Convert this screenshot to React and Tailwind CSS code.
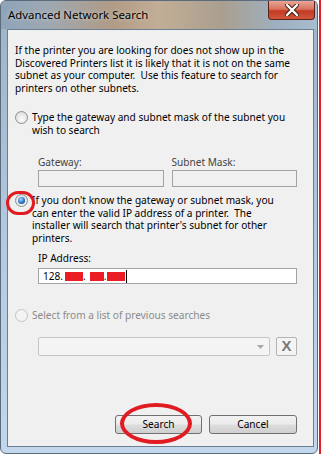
import React from 'react';

function Radio({ checked, disabled }) {
  return (
    <span
      className={
        disabled
          ? 'flex h-[13px] w-[13px] shrink-0 items-center justify-center rounded-full border border-[#c4c4c4] bg-[#f3f3f3]'
          : 'flex h-[13px] w-[13px] shrink-0 items-center justify-center rounded-full border border-[#8d8e8f] bg-[radial-gradient(circle_at_50%_65%,#fbfbfb,#d6d6d6)]'
      }
    >
      {checked && <span className="h-[7px] w-[7px] rounded-full bg-[radial-gradient(circle_at_40%_35%,#a8dcff,#2a74c4_55%,#0d3c7a)]" />}
    </span>
  );
}

function Btn({ children, className }) {
  return (
    <div className={'flex h-[19px] items-center justify-center rounded-[3px] border border-[#707070] bg-[linear-gradient(180deg,#f2f2f2_0%,#ebebeb_48%,#dddddd_52%,#cfcfcf_100%)] ' + className}>
      {children}
    </div>
  );
}

export default function App() {
  return (
    <div className="relative flex h-[454px] w-[321px] overflow-hidden bg-white font-['Noto_Sans',sans-serif] text-[10.1px] leading-[12.6px] text-black">
      <div className="flex h-[454px] w-[318px] flex-col rounded-[6px] border border-[#5b6b7c] bg-[linear-gradient(180deg,#9db2c7_0%,#b4cae0_55%,#c2d7ec_100%)]">
        <div className="flex h-[28px] shrink-0 items-start justify-between rounded-t-[5px] bg-[linear-gradient(90deg,#8ea4ba_0%,#9ea8b1_15%,#b09b86_35%,#c2ae96_50%,#aa9f8f_70%,#9eb0c1_88%,#a9bdd0_100%)]">
          <span className="ml-[7px] mt-[7px] text-[11.4px] leading-[14px] [text-shadow:0_0_4px_rgba(255,255,255,0.6)]">Advanced Network Search</span>
          <div className="mr-[2px] flex h-[19px] w-[47px] items-center justify-center rounded-b-[4px] border border-t-0 border-[#5e2218] bg-[linear-gradient(180deg,#e9a597_0%,#d8735f_45%,#c23a22_55%,#d0563e_100%)]">
            <svg width="14" height="12" viewBox="0 0 14 12">
              <path d="M2 1 L12 11 M12 1 L2 11" stroke="#3d1a14" strokeWidth="4.2" strokeLinecap="round" />
              <path d="M2 1 L12 11 M12 1 L2 11" stroke="#ffffff" strokeWidth="2.4" strokeLinecap="round" />
            </svg>
          </div>
        </div>
        <div className="ml-[6px] flex h-[418px] w-[307px] shrink-0 flex-col border border-[#6c7e92] bg-[#f0f0f0] pl-[7px] pr-[16px] pt-[14px]">
          <p className="whitespace-pre">
            {'If the printer you are looking for does not show up in the\nDiscovered Printers list it is likely that it is not on the same\nsubnet as your computer.  Use this feature to search for\nprinters on other subnets.'}
          </p>
          <div className="mt-[17px] flex items-start gap-[4px]">
            <Radio />
            <span className="whitespace-pre">{'Type the gateway and subnet mask of the subnet you\nwish to search'}</span>
          </div>
          <div className="ml-[23px] mt-[19px] grid grid-cols-2 gap-x-[8px] text-[#444444]">
            <span>Gateway:</span>
            <span>Subnet Mask:</span>
            <div className="mt-[2px] h-[17px] border border-[#a3a3a3] bg-[#f0f0f0]" />
            <div className="mt-[2px] h-[17px] border border-[#a3a3a3] bg-[#f0f0f0]" />
          </div>
          <div className="mt-[7px] flex items-start gap-[4px]">
            <Radio checked />
            <span className="whitespace-pre">{"If you don't know the gateway or subnet mask, you\ncan enter the valid IP address of a printer.  The\ninstaller will search that printer's subnet for other\nprinters."}</span>
          </div>
          <div className="ml-[23px] mt-[7px] flex flex-col">
            <span>IP Address:</span>
            <div className="mt-[4px] flex h-[16px] items-center border border-[#a0a3a8] bg-white pl-[4px]">
              <span>128.</span>
              <span className="ml-[2px] h-[9px] w-[18px] bg-[#ec1c24]" />
              <span>.</span>
              <span className="ml-[4px] h-[9px] w-[14px] bg-[#ec1c24]" />
              <span>.</span>
              <span className="ml-[1px] h-[9px] w-[18px] bg-[#ec1c24]" />
              <span className="ml-[1px] h-[13px] w-[1px] bg-black" />
            </div>
          </div>
          <div className="mt-[25px] flex items-start gap-[4px] text-[#8b8b8b]">
            <Radio disabled />
            <span>Select from a list of previous searches</span>
          </div>
          <div className="ml-[23px] mt-[15px] flex gap-[6px]">
            <div className="flex h-[19px] flex-1 items-center justify-end rounded-[2px] border border-[#c6c6c6] bg-[#f4f4f4] pr-[5px]">
              <svg width="7" height="4" viewBox="0 0 7 4">
                <path d="M0 0 H7 L3.5 4 Z" fill="#a8a8a8" />
              </svg>
            </div>
            <div className="flex h-[19px] w-[21px] items-center justify-center rounded-[2px] border border-[#b4b4b4] bg-[#f4f4f4] font-['Liberation_Sans',sans-serif] text-[15px] font-bold text-[#787878]">
              X
            </div>
          </div>
          <div className="mt-[59px] flex justify-end gap-[7px]">
            <Btn className="w-[87px]">Search</Btn>
            <Btn className="w-[88px]">Cancel</Btn>
          </div>
        </div>
      </div>
      <div className="w-[1px] bg-white" />
      <div className="w-[2px] bg-[#e31e25]" />
      <div className="pointer-events-none absolute left-[6px] top-[191px] h-[24px] w-[29px] rounded-full border-[3px] border-[#e11b22]" />
      <div className="pointer-events-none absolute left-[120px] top-[403px] h-[41px] w-[72px] rounded-[50%] border-[4px] border-[#e11b22]" />
    </div>
  );
}
